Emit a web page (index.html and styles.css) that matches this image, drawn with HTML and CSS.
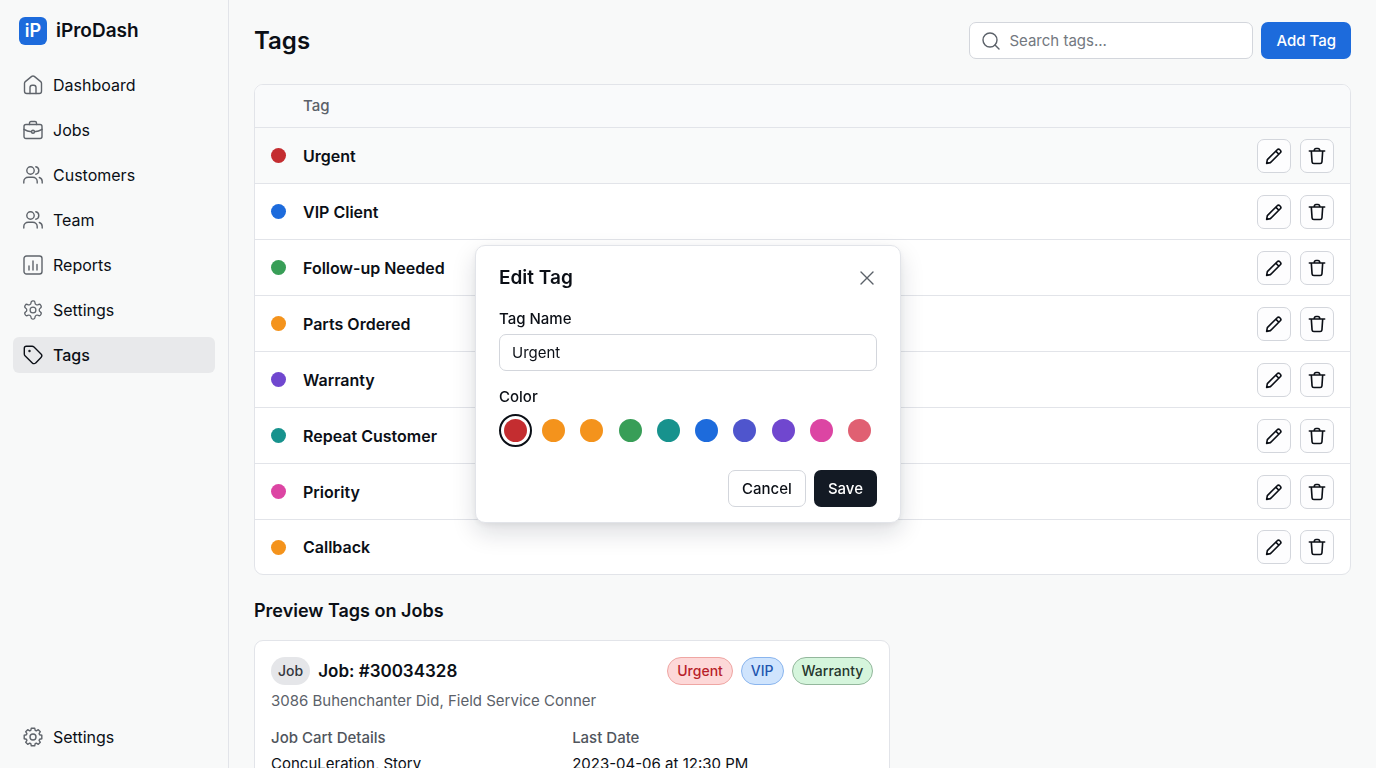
FILE: index.html
```html
<!DOCTYPE html>
<html lang="en">
<head>
    <meta charset="UTF-8">
    <meta name="viewport" content="width=device-width, initial-scale=1.0">
    <title>Tags - iProDash</title>
    <link rel="stylesheet" href="styles.css">
</head>
<body>
    <!-- Icon sprite -->
    <svg class="sprite" aria-hidden="true">
        <symbol id="icon-home" viewBox="0 0 20 20">
            <path d="M1.5 8.3c0-.7.3-1.3.8-1.7l6.4-5.2c.8-.6 1.8-.6 2.6 0l6.4 5.2c.5.4.8 1 .8 1.7v7.9c0 1.3-1 2.3-2.3 2.3H3.8c-1.3 0-2.3-1-2.3-2.3z"/>
            <path d="M7 18.5v-6c0-1.3.9-2.2 2.2-2.2h1.6c1.3 0 2.2.9 2.2 2.2v6"/>
        </symbol>
        <symbol id="icon-briefcase" viewBox="0 0 20 20">
            <rect x="1" y="4.5" width="18" height="14" rx="2"/>
            <path d="M6.5 4.5V3c0-.9.6-1.5 1.5-1.5h4c.9 0 1.5.6 1.5 1.5v1.5M1 9.3c2.3 1.5 4.7 2.2 7.5 2.4M19 9.3c-2.3 1.5-4.7 2.2-7.5 2.4"/>
            <circle cx="10" cy="11.8" r="1.5"/>
        </symbol>
        <symbol id="icon-users" viewBox="0 0 20 20">
            <circle cx="7.5" cy="5.5" r="3.7"/>
            <path d="M.8 18v-1.5c0-2.5 2-4.3 4.5-4.3h4.4c2.5 0 4.5 1.8 4.5 4.3V18M12.8 1.8c1.9.4 3 1.9 3 3.7s-1.1 3.3-3 3.7M16.3 12.5c1.8.6 2.9 2 2.9 4V18"/>
        </symbol>
        <symbol id="icon-chart" viewBox="0 0 20 20">
            <rect x="1" y="1" width="18" height="18" rx="2.5"/>
            <path d="M6 11v4M10 6v9M14 9.5V15"/>
        </symbol>
        <symbol id="icon-gear" viewBox="1 1 22 22">
            <path d="M12.22 2h-.44a2 2 0 0 0-2 2v.18a2 2 0 0 1-1 1.73l-.43.25a2 2 0 0 1-2 0l-.15-.08a2 2 0 0 0-2.73.73l-.22.38a2 2 0 0 0 .73 2.73l.15.1a2 2 0 0 1 1 1.72v.51a2 2 0 0 1-1 1.74l-.15.09a2 2 0 0 0-.73 2.73l.22.38a2 2 0 0 0 2.73.73l.15-.08a2 2 0 0 1 2 0l.43.25a2 2 0 0 1 1 1.73V20a2 2 0 0 0 2 2h.44a2 2 0 0 0 2-2v-.18a2 2 0 0 1 1-1.73l.43-.25a2 2 0 0 1 2 0l.15.08a2 2 0 0 0 2.73-.73l.22-.39a2 2 0 0 0-.73-2.73l-.15-.08a2 2 0 0 1-1-1.74v-.5a2 2 0 0 1 1-1.74l.15-.09a2 2 0 0 0 .73-2.73l-.22-.38a2 2 0 0 0-2.73-.73l-.15.08a2 2 0 0 1-2 0l-.43-.25a2 2 0 0 1-1-1.73V4a2 2 0 0 0-2-2z"/>
            <circle cx="12" cy="12" r="3.2"/>
        </symbol>
        <symbol id="icon-cog" viewBox="0 0 20 20">
            <path d="M8.3 1.2h3.4l.5 2.2 1.1.5 2-1.2 2 2-1.2 2 .5 1.1 2.2.5v3.4l-2.2.5-.5 1.1 1.2 2-2 2-2-1.2-1.1.5-.5 2.2H8.3l-.5-2.2-1.1-.5-2 1.2-2-2 1.2-2-.5-1.1-2.2-.5V8.3l2.2-.5.5-1.1-1.2-2 2-2 2 1.2 1.1-.5z"/>
            <circle cx="10" cy="10" r="3"/>
        </symbol>
        <symbol id="icon-tag" viewBox="0 0 20 20">
            <path d="M1.3 3.2c0-1.1.8-1.9 1.9-1.9h6c.7 0 1.3.3 1.8.7l7 7c1 1 1 2.4 0 3.4l-5.3 5.5c-.9 1-2.4 1-3.4 0L2 10.8c-.5-.5-.7-1.1-.7-1.8z"/>
            <circle cx="6.5" cy="6" r=".5"/>
        </symbol>
        <symbol id="icon-search" viewBox="0 0 20 20">
            <circle cx="9" cy="9" r="7"/>
            <path d="M14 14l4 4"/>
        </symbol>
        <symbol id="icon-pencil" viewBox="0 0 20 20">
            <path d="M1.8 18.2l.8-4.2L13.6 3c.8-.8 2-.8 2.800 0l.6.6c.8.8.8 2 0 2.800L6 17.400zM12 4.600l3.400 3.400"/>
        </symbol>
        <symbol id="icon-trash" viewBox="0 0 20 20">
            <path d="M1.5 4.5h17M3.7 4.7l.8 11.8c.1 1.2.8 1.9 2 1.9h7c1.2 0 1.9-.7 2-1.9l.8-11.8M6.8 4.3l.4-1.5c.2-.8.7-1.2 1.5-1.2h2.6c.8 0 1.3.4 1.5 1.2l.4 1.5"/>
        </symbol>
        <symbol id="icon-close" viewBox="0 0 20 20">
            <path d="M4 4l12 12M16 4L4 16"/>
        </symbol>
    </svg>

    <div class="layout">
        <!-- Sidebar -->
        <aside class="sidebar">
            <div class="brand">
                <span class="brand-mark">iP</span>
                <span>iProDash</span>
            </div>
            <nav class="nav">
                <a class="nav-link" href="#"><svg class="icon"><use href="#icon-home"/></svg>Dashboard</a>
                <a class="nav-link" href="#"><svg class="icon"><use href="#icon-briefcase"/></svg>Jobs</a>
                <a class="nav-link" href="#"><svg class="icon"><use href="#icon-users"/></svg>Customers</a>
                <a class="nav-link" href="#"><svg class="icon"><use href="#icon-users"/></svg>Team</a>
                <a class="nav-link" href="#"><svg class="icon"><use href="#icon-chart"/></svg>Reports</a>
                <a class="nav-link" href="#"><svg class="icon"><use href="#icon-gear"/></svg>Settings</a>
                <a class="nav-link active" href="#" aria-current="page"><svg class="icon"><use href="#icon-tag"/></svg>Tags</a>
                <a class="nav-link nav-bottom" href="#"><svg class="icon"><use href="#icon-cog"/></svg>Settings</a>
            </nav>
        </aside>

        <!-- Main content -->
        <main class="main">
            <header class="page-header">
                <h1>Tags</h1>
                <div class="search">
                    <svg class="icon"><use href="#icon-search"/></svg>
                    <input type="search" placeholder="Search tags..." aria-label="Search tags">
                </div>
                <button class="btn btn-primary" type="button">Add Tag</button>
            </header>

            <div class="table-card">
                <table class="tags-table">
                    <thead>
                        <tr>
                            <th class="col-dot"></th>
                            <th>Tag</th>
                            <th class="col-actions"></th>
                        </tr>
                    </thead>
                    <tbody>
                        <tr class="selected">
                            <td><span class="dot red"></span></td>
                            <td>Urgent</td>
                            <td><div class="actions">
                                <button class="icon-btn" type="button" aria-label="Edit Urgent"><svg class="icon"><use href="#icon-pencil"/></svg></button>
                                <button class="icon-btn" type="button" aria-label="Delete Urgent"><svg class="icon"><use href="#icon-trash"/></svg></button>
                            </div></td>
                        </tr>
                        <tr>
                            <td><span class="dot blue"></span></td>
                            <td>VIP Client</td>
                            <td><div class="actions">
                                <button class="icon-btn" type="button" aria-label="Edit VIP Client"><svg class="icon"><use href="#icon-pencil"/></svg></button>
                                <button class="icon-btn" type="button" aria-label="Delete VIP Client"><svg class="icon"><use href="#icon-trash"/></svg></button>
                            </div></td>
                        </tr>
                        <tr>
                            <td><span class="dot green"></span></td>
                            <td>Follow-up Needed</td>
                            <td><div class="actions">
                                <button class="icon-btn" type="button" aria-label="Edit Follow-up Needed"><svg class="icon"><use href="#icon-pencil"/></svg></button>
                                <button class="icon-btn" type="button" aria-label="Delete Follow-up Needed"><svg class="icon"><use href="#icon-trash"/></svg></button>
                            </div></td>
                        </tr>
                        <tr>
                            <td><span class="dot orange"></span></td>
                            <td>Parts Ordered</td>
                            <td><div class="actions">
                                <button class="icon-btn" type="button" aria-label="Edit Parts Ordered"><svg class="icon"><use href="#icon-pencil"/></svg></button>
                                <button class="icon-btn" type="button" aria-label="Delete Parts Ordered"><svg class="icon"><use href="#icon-trash"/></svg></button>
                            </div></td>
                        </tr>
                        <tr>
                            <td><span class="dot purple"></span></td>
                            <td>Warranty</td>
                            <td><div class="actions">
                                <button class="icon-btn" type="button" aria-label="Edit Warranty"><svg class="icon"><use href="#icon-pencil"/></svg></button>
                                <button class="icon-btn" type="button" aria-label="Delete Warranty"><svg class="icon"><use href="#icon-trash"/></svg></button>
                            </div></td>
                        </tr>
                        <tr>
                            <td><span class="dot teal"></span></td>
                            <td>Repeat Customer</td>
                            <td><div class="actions">
                                <button class="icon-btn" type="button" aria-label="Edit Repeat Customer"><svg class="icon"><use href="#icon-pencil"/></svg></button>
                                <button class="icon-btn" type="button" aria-label="Delete Repeat Customer"><svg class="icon"><use href="#icon-trash"/></svg></button>
                            </div></td>
                        </tr>
                        <tr>
                            <td><span class="dot pink"></span></td>
                            <td>Priority</td>
                            <td><div class="actions">
                                <button class="icon-btn" type="button" aria-label="Edit Priority"><svg class="icon"><use href="#icon-pencil"/></svg></button>
                                <button class="icon-btn" type="button" aria-label="Delete Priority"><svg class="icon"><use href="#icon-trash"/></svg></button>
                            </div></td>
                        </tr>
                        <tr>
                            <td><span class="dot orange"></span></td>
                            <td>Callback</td>
                            <td><div class="actions">
                                <button class="icon-btn" type="button" aria-label="Edit Callback"><svg class="icon"><use href="#icon-pencil"/></svg></button>
                                <button class="icon-btn" type="button" aria-label="Delete Callback"><svg class="icon"><use href="#icon-trash"/></svg></button>
                            </div></td>
                        </tr>
                    </tbody>
                </table>
            </div>

            <!-- Job preview -->
            <h2 class="section-title">Preview Tags on Jobs</h2>
            <section class="job-card">
                <div class="job-header">
                    <span class="pill pill-grey">Job</span>
                    <h3>Job: #30034328</h3>
                    <div class="job-tags">
                        <span class="pill pill-red">Urgent</span>
                        <span class="pill pill-blue">VIP</span>
                        <span class="pill pill-green">Warranty</span>
                    </div>
                </div>
                <p class="job-address">3086 Buhenchanter Did, Field Service Conner</p>
                <dl class="job-details">
                    <div>
                        <dt>Job Cart Details</dt>
                        <dd>ConcuLeration, Story</dd>
                    </div>
                    <div>
                        <dt>Last Date</dt>
                        <dd>2023-04-06 at 12:30 PM</dd>
                    </div>
                </dl>
            </section>
        </main>
    </div>

    <!-- Edit tag dialog -->
    <div class="modal-wrap">
        <form class="modal" role="dialog" aria-labelledby="modalTitle">
            <div class="modal-header">
                <h2 id="modalTitle">Edit Tag</h2>
                <button class="close-btn" type="button" aria-label="Close"><svg class="icon"><use href="#icon-close"/></svg></button>
            </div>
            <label class="field-label" for="tagName">Tag Name</label>
            <input class="text-input" type="text" id="tagName" value="Urgent">
            <fieldset class="colors">
                <legend class="field-label">Color</legend>
                <div class="swatches">
                    <input class="swatch red" type="radio" name="color" aria-label="Red" checked>
                    <input class="swatch orange" type="radio" name="color" aria-label="Orange">
                    <input class="swatch orange" type="radio" name="color" aria-label="Amber">
                    <input class="swatch green" type="radio" name="color" aria-label="Green">
                    <input class="swatch teal" type="radio" name="color" aria-label="Teal">
                    <input class="swatch blue" type="radio" name="color" aria-label="Blue">
                    <input class="swatch indigo" type="radio" name="color" aria-label="Indigo">
                    <input class="swatch purple" type="radio" name="color" aria-label="Purple">
                    <input class="swatch pink" type="radio" name="color" aria-label="Pink">
                    <input class="swatch rose" type="radio" name="color" aria-label="Rose">
                </div>
            </fieldset>
            <div class="modal-footer">
                <button class="btn btn-outline" type="button">Cancel</button>
                <button class="btn btn-dark" type="submit">Save</button>
            </div>
        </form>
    </div>
</body>
</html>
```
FILE: styles.css
```css
:root {
    --primary-color: #1d6bdc;
    --text-dark: #0b0f16;
    --text-muted: #5b6169;
    --border-color: #e2e4e9;
    --input-border: #d3d6dc;
    --page-bg: #f8f9f9;
}

* {
    margin: 0;
    padding: 0;
    box-sizing: border-box;
}

body {
    font-family: 'Inter', 'Liberation Sans', sans-serif;
    font-size: 16px;
    line-height: 20px;
    color: var(--text-dark);
    background: var(--page-bg);
}

button, input {
    font: inherit;
    color: inherit;
}

button {
    cursor: pointer;
}

.sprite {
    position: absolute;
    width: 0;
    height: 0;
}

.icon {
    width: 20px;
    height: 20px;
    flex-shrink: 0;
    fill: none;
    stroke: currentColor;
    stroke-width: 1.4;
    stroke-linecap: round;
    stroke-linejoin: round;
}

.layout {
    display: flex;
    height: 100vh;
}

/* Sidebar */
.sidebar {
    display: flex;
    flex-direction: column;
    width: 229px;
    flex-shrink: 0;
    padding: 17px 13px 13px;
    border-right: 1px solid var(--border-color);
}

.brand {
    display: flex;
    align-items: center;
    gap: 9px;
    padding: 0 6px;
    margin-bottom: 22px;
    font-size: 19px;
    line-height: 28px;
    font-weight: 600;
}

.brand-mark {
    width: 28px;
    border-radius: 6px;
    background: var(--primary-color);
    color: white;
    font-size: 18px;
    text-align: center;
}

.nav {
    display: flex;
    flex-direction: column;
    flex: 1;
    gap: 9px;
}

.nav-link {
    display: flex;
    align-items: center;
    gap: 10px;
    height: 36px;
    padding: 0 10px;
    border-radius: 6px;
    color: var(--text-dark);
    text-decoration: none;
}

.nav-link .icon {
    color: #5f646b;
}

.nav-link.active {
    background: #e8e9eb;
    font-weight: 500;
}

.nav-link.active .icon {
    color: var(--text-dark);
}

.nav-bottom {
    margin-top: auto;
}

/* Main */
.main {
    flex: 1;
    min-width: 0;
    padding: 22px 25px;
    overflow-y: auto;
    scrollbar-width: none;
}

.page-header {
    display: flex;
    align-items: center;
    gap: 8px;
    margin-bottom: 25px;
}

h1 {
    flex: 1;
    font-size: 24px;
    line-height: 32px;
    font-weight: 600;
}

.search {
    display: flex;
    align-items: center;
    gap: 8px;
    width: 284px;
    height: 37px;
    padding: 0 11px;
    border: 1px solid var(--input-border);
    border-radius: 7px;
    background: white;
    color: var(--text-muted);
}

.search input {
    flex: 1;
    min-width: 0;
    border: none;
    outline: none;
    background: none;
    font-size: 15px;
}

.search input::placeholder {
    color: #737880;
}

.btn {
    height: 37px;
    padding: 0 13px;
    border: 1px solid transparent;
    border-radius: 7px;
    font-size: 15px;
    font-weight: 500;
}

.btn-primary {
    padding: 0 14px;
    background: var(--primary-color);
    color: white;
}

.btn-outline {
    border-color: var(--input-border);
    background: white;
}

.btn-dark {
    background: #131a24;
    color: white;
}

/* Tags table */
.table-card {
    border: 1px solid var(--border-color);
    border-radius: 9px;
    background: white;
    overflow: hidden;
}

.tags-table {
    width: 100%;
    border-collapse: separate;
    border-spacing: 0;
    text-align: left;
}

.tags-table th {
    height: 43px;
    background: #f9fafb;
    border-bottom: 1px solid var(--border-color);
    color: var(--text-muted);
    font-size: 15px;
    font-weight: 500;
}

.tags-table td {
    height: 56px;
    border-bottom: 1px solid var(--border-color);
    font-weight: 600;
}

.tags-table tr:last-child td {
    height: 54px;
    border-bottom: none;
}

.tags-table .selected td {
    background: #f9fafa;
}

.tags-table th:first-child,
.tags-table td:first-child {
    padding-left: 16px;
}

.tags-table .col-dot {
    width: 48px;
}

.tags-table .col-actions {
    width: 120px;
}

.dot {
    display: block;
    width: 15px;
    height: 15px;
    border-radius: 50%;
}

.actions {
    display: flex;
    justify-content: flex-end;
    gap: 9px;
    padding-right: 16px;
}

.icon-btn {
    display: flex;
    align-items: center;
    justify-content: center;
    width: 34px;
    height: 34px;
    border: 1px solid var(--input-border);
    border-radius: 7px;
    background: #fdfdfe;
}

.icon-btn .icon {
    width: 18px;
    height: 18px;
    stroke-width: 1.8;
}

/* Tag colors */
.red { background-color: #c42d30; }
.orange { background-color: #f4931c; }
.green { background-color: #389e57; }
.teal { background-color: #17928d; }
.blue { background-color: #1d6bdc; }
.indigo { background-color: #4f55cd; }
.purple { background-color: #7047cf; }
.pink { background-color: #dc45a3; }
.rose { background-color: #e06072; }

/* Job preview */
h2 {
    font-size: 18px;
    line-height: 28px;
    font-weight: 600;
}

.section-title {
    margin: 22px 0 15px;
}

.job-card {
    width: 58%;
    padding: 16px;
    border: 1px solid var(--border-color);
    border-radius: 9px;
    background: white;
    font-size: 15px;
}

.job-header {
    display: flex;
    align-items: center;
    gap: 8px;
    margin-bottom: 6px;
}

h3 {
    font-size: 17px;
    line-height: 28px;
    font-weight: 600;
}

.job-tags {
    display: flex;
    gap: 8px;
    margin-left: auto;
}

.pill {
    padding: 3px 9px;
    border: 1px solid transparent;
    border-radius: 14px;
    font-size: 14px;
    font-weight: 500;
}

.pill-grey {
    padding: 3px 6px;
    background: #e5e6e9;
    color: #33373d;
}

.pill-red {
    background: #fdd8d8;
    border-color: #efa6a3;
    color: #b81f2a;
}

.pill-blue {
    background: #cfe4fd;
    border-color: #8ab5ee;
    color: #2154ae;
}

.pill-green {
    background: #d5f5dc;
    border-color: #93b79c;
    color: #26362d;
}

.job-address {
    color: var(--text-muted);
}

.job-details {
    display: grid;
    grid-template-columns: 1fr 1fr;
    margin-top: 17px;
}

.job-details dt {
    margin-bottom: 6px;
    color: #50555d;
    font-weight: 500;
}

/* Dialog */
.modal-wrap {
    position: fixed;
    inset: 0;
    display: flex;
    align-items: center;
    justify-content: center;
    pointer-events: none;
}

.modal {
    width: 426px;
    max-width: 100%;
    padding: 18px 23px 15px;
    border: 1px solid var(--border-color);
    border-radius: 10px;
    background: white;
    box-shadow: 0 10px 24px rgba(15, 20, 40, 0.14), 0 2px 6px rgba(15, 20, 40, 0.06);
    pointer-events: auto;
}

.modal-header {
    display: flex;
    align-items: center;
    justify-content: space-between;
    margin-bottom: 17px;
}

.modal-header h2 {
    font-size: 19px;
}

.close-btn {
    width: 20px;
    height: 20px;
    border: none;
    background: none;
    color: var(--text-muted);
}

.close-btn .icon {
    display: block;
}

.field-label {
    display: block;
    font-size: 15px;
    font-weight: 500;
}

.text-input {
    display: block;
    width: 100%;
    height: 37px;
    margin: 5px 0 16px;
    padding: 0 12px;
    border: 1px solid var(--input-border);
    border-radius: 7px;
    background: white;
    font-size: 15px;
}

.colors {
    border: none;
}

.swatches {
    display: flex;
    justify-content: space-between;
    padding: 7px 1px 0 0;
}

.swatch {
    appearance: none;
    width: 33px;
    height: 33px;
    padding: 3px;
    border: 2px solid transparent;
    border-radius: 50%;
    background-clip: content-box;
    cursor: pointer;
}

.swatch:checked {
    border-color: var(--text-dark);
}

.modal-footer {
    display: flex;
    justify-content: flex-end;
    gap: 8px;
    margin-top: 23px;
}

@media (max-width: 768px) {
    .sidebar {
        display: none;
    }

    .job-card {
        width: 100%;
    }
}
```
